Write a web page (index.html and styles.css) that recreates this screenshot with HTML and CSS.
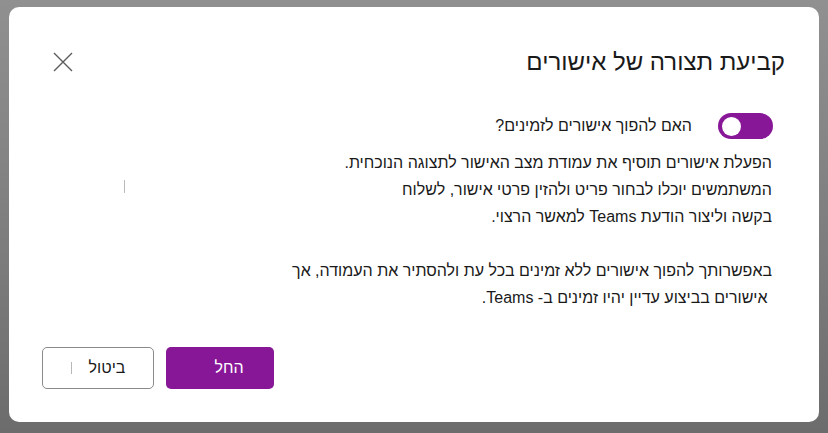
FILE: index.html
```html
<!DOCTYPE html>
<html lang="he" dir="rtl">
<head>
<meta charset="utf-8">
<title>קביעת תצורה של אישורים</title>
<link rel="stylesheet" href="styles.css">
</head>
<body>
<div class="dialog">
  <div class="header">
    <h1 class="title">קביעת תצורה של אישורים</h1>
    <button class="close" aria-label="סגור">
      <svg width="20" height="20" viewBox="0 0 20 20"><path d="M1 1 L19 19 M19 1 L1 19" stroke="#5c5c5c" stroke-width="1.4" fill="none"/></svg>
    </button>
  </div>
  <div class="toggle-row">
    <span class="toggle"><span class="knob"></span></span>
    <span class="toggle-label">האם להפוך אישורים לזמינים?</span>
  </div>
  <div class="text">
    <p>הפעלת אישורים תוסיף את עמודת מצב האישור לתצוגה הנוכחית.<br>המשתמשים יוכלו לבחור פריט ולהזין פרטי אישור, לשלוח<br>בקשה וליצור הודעת Teams למאשר הרצוי.</p>
    <p>באפשרותך להפוך אישורים ללא זמינים בכל עת ולהסתיר את העמודה, אך<br>&nbsp;אישורים בביצוע עדיין יהיו זמינים ב- Teams.</p>
  </div>
  <div class="footer">
    <button class="btn secondary">ביטול</button>
    <button class="btn primary">החל</button>
  </div>
  <span class="caret caret-a"></span>
  <span class="caret caret-b"></span>
</div>
</body>
</html>
```
FILE: styles.css
```css
html, body {
  margin: 0;
  height: 100%;
}
body {
  background: linear-gradient(180deg, #909090 0%, #7c7c7c 60%, #6c6c6c 100%);
  padding: 7px 9px 0 9px;
  box-sizing: border-box;
  font-family: "Liberation Sans", Arial, sans-serif;
  color: #1a1a1a;
}
.dialog {
  position: relative;
  width: 810px;
  height: 415px;
  background: #fff;
  border-radius: 10px;
  box-sizing: border-box;
  padding: 39px 0 33px 0;
}
.header {
  display: flex;
  align-items: center;
  justify-content: space-between;
  height: 32px;
  padding: 0 34px 0 44px;
}
.title {
  margin: 0;
  font-size: 24px;
  font-weight: normal;
  line-height: 32px;
  color: #1a1a1a;
}
.close {
  border: 0;
  background: none;
  padding: 0;
  width: 20px;
  height: 20px;
  display: block;
}
.close svg { display: block; }
.toggle-row {
  display: flex;
  align-items: center;
  height: 26px;
  margin-top: 35px;
  padding: 0 46px 0 0;
  gap: 26px;
}
.toggle {
  position: relative;
  width: 55px;
  height: 26px;
  border-radius: 13px;
  background: #881798;
  flex: none;
}
.knob {
  position: absolute;
  right: 32px;
  top: 3.5px;
  width: 19px;
  height: 19px;
  border-radius: 50%;
  background: #fff;
}
.toggle-label {
  font-size: 16px;
  line-height: 26px;
}
.text {
  margin-top: 9.5px;
  padding: 0 47px 0 0;
  font-size: 16px;
  line-height: 27px;
}
.text p {
  margin: 0 0 27px 0;
}
.text p:last-child { margin-bottom: 0; }
.footer {
  display: flex;
  direction: ltr;
  justify-content: flex-start;
  gap: 12px;
  margin-top: 36.5px;
  padding: 0 0 0 33px;
}
.btn {
  height: 42px;
  border-radius: 5px;
  font-family: "Liberation Sans", Arial, sans-serif;
  font-size: 16px;
  box-sizing: border-box;
  padding: 0 0 0 18px;
}
.primary {
  width: 108px;
  background: #881798;
  color: #fff;
  border: 0;
}
.secondary {
  width: 112px;
  background: #fff;
  color: #1a1a1a;
  border: 1px solid #8a8a8a;
}
.caret {
  position: absolute;
  width: 1px;
  background: #b8b8b8;
}
.caret-a { left: 115px; top: 173px; height: 13px; }
.caret-b { left: 62px; top: 355px; height: 12px; }
```
